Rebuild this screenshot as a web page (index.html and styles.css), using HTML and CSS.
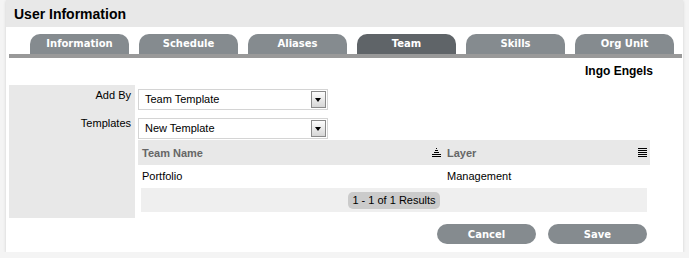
FILE: index.html
```html
<!DOCTYPE html>
<html>
<head>
  <title>User Information</title>
  <link rel="stylesheet" href="styles.css">
</head>
<body>
  <div class="panel">
    <div class="panel-head">
      <h1 class="panel-title">User Information</h1>
    </div>

    <ul class="tabs">
      <li class="tab">Information</li>
      <li class="tab">Schedule</li>
      <li class="tab">Aliases</li>
      <li class="tab active">Team</li>
      <li class="tab">Skills</li>
      <li class="tab">Org Unit</li>
    </ul>
    <div class="tab-line"></div>

    <div class="owner">Ingo Engels</div>

    <div class="form">
      <div class="labels">
        <div class="label">Add By</div>
        <div class="label">Templates</div>
      </div>
      <div class="fields">
        <div class="select">Team Template<span class="select-arrow"></span></div>
        <div class="select">New Template<span class="select-arrow"></span></div>

        <div class="grid-head">
          <div class="col-name">Team Name</div>
          <svg class="sort-icon" width="9" height="9" viewBox="0 0 9 9">
            <rect x="4" y="0" width="1" height="1" fill="#000"/>
            <rect x="3" y="2" width="3" height="1" fill="#000"/>
            <rect x="2" y="4" width="5" height="1" fill="#000"/>
            <rect x="0" y="6" width="9" height="1" fill="#000"/>
            <rect x="0" y="8" width="9" height="1" fill="#000"/>
          </svg>
          <div class="col-layer">Layer</div>
          <svg class="menu-icon" width="9" height="9" viewBox="0 0 9 9">
            <rect x="0" y="0" width="9" height="1" fill="#000"/>
            <rect x="0" y="2" width="9" height="1" fill="#000"/>
            <rect x="0" y="4" width="9" height="1" fill="#000"/>
            <rect x="0" y="6" width="9" height="1" fill="#000"/>
            <rect x="0" y="8" width="9" height="1" fill="#000"/>
          </svg>
        </div>
        <div class="grid-row">
          <div class="cell-name">Portfolio</div>
          <div class="cell-layer">Management</div>
        </div>
        <div class="pager">
          <span class="pager-info">1 - 1 of 1 Results</span>
        </div>
      </div>
    </div>

    <div class="actions">
      <button class="button">Cancel</button>
      <button class="button">Save</button>
    </div>
  </div>
</body>
</html>
```

FILE: styles.css
```css
body {
    margin: 0;
    padding: 0;
    background-color: #f4f4f4;
    font-family: 'Liberation Sans', Arial, sans-serif;
    font-size: 11px;
    color: #000;
}

.panel {
    margin: 0 6px 0 6px;
    height: 252px;
    background-color: #fff;
    box-shadow: 0 1px 3px rgba(0, 0, 0, 0.15);
}

.panel-head {
    height: 27px;
    background-color: #e8e8e8;
    padding-left: 8px;
}

.panel-title {
    margin: 0;
    font-size: 14px;
    font-weight: bold;
    line-height: 28px;
    color: #000;
}

.tabs {
    list-style: none;
    margin: 0;
    padding: 7px 0 0 24px;
    display: flex;
    gap: 10px;
}

.tab {
    width: 99px;
    height: 20px;
    line-height: 19px;
    text-align: center;
    background-color: #858b8f;
    color: #fff;
    font-family: 'DejaVu Sans', Verdana, sans-serif;
    font-size: 10px;
    font-weight: bold;
    border-radius: 10px 10px 0 0;
}

.tab.active {
    background-color: #5f6468;
}

.tab-line {
    height: 4px;
    margin: 0 1px 0 3px;
    background-color: #999;
}

.owner {
    height: 27px;
    line-height: 27px;
    text-align: right;
    padding-right: 30px;
    font-size: 12px;
    font-weight: bold;
}

.form {
    display: flex;
    gap: 3px;
    margin-left: 3px;
    margin-right: 33px;
}

.labels {
    width: 126px;
    background-color: #e8e8e8;
    padding-top: 3px;
    text-align: right;
}

.label {
    line-height: 14px;
    padding-right: 4px;
    margin-bottom: 14px;
}

.fields {
    flex: 1;
    padding-top: 4px;
    padding-bottom: 6px;
}

.select {
    position: relative;
    box-sizing: border-box;
    width: 190px;
    height: 21px;
    line-height: 19px;
    padding-left: 6px;
    border: 1px solid #d4d4d4;
    margin-bottom: 8px;
}

.select-arrow {
    position: absolute;
    right: 1px;
    top: 1px;
    box-sizing: border-box;
    width: 15px;
    height: 17px;
    border: 1px solid #8a8a8a;
    background: linear-gradient(#fdfdfd, #d6d6d6);
}

.select-arrow::after {
    content: "";
    position: absolute;
    left: 3px;
    top: 6px;
    border-left: 3.5px solid transparent;
    border-right: 3.5px solid transparent;
    border-top: 4px solid #000;
}

.grid-head {
    display: flex;
    align-items: center;
    height: 25px;
    margin-top: -7px;
    padding: 0 3px 0 4px;
    background-color: #e8e8e8;
    font-weight: bold;
    color: #666;
}

.col-name {
    width: 290px;
}

.sort-icon {
    margin-right: 6px;
}

.col-layer {
    flex: 1;
}

.grid-row {
    display: flex;
    height: 23px;
    line-height: 23px;
    margin: 0 3px;
    padding-left: 1px;
}

.cell-name {
    width: 305px;
}

.pager {
    height: 24px;
    margin: 0 3px;
    background-color: #efefef;
    display: flex;
    align-items: center;
    justify-content: center;
}

.pager-info {
    background-color: #cbcbcb;
    border-radius: 5px;
    padding: 0 4px;
    line-height: 17px;
}

.actions {
    display: flex;
    justify-content: flex-end;
    gap: 12px;
    padding: 6px 36px 0 0;
}

.button {
    width: 99px;
    height: 20px;
    border: none;
    border-radius: 10px;
    background-color: #858b8f;
    color: #fff;
    font-family: 'DejaVu Sans', Verdana, sans-serif;
    font-size: 10px;
    font-weight: bold;
    padding: 0;
    cursor: pointer;
}
```
